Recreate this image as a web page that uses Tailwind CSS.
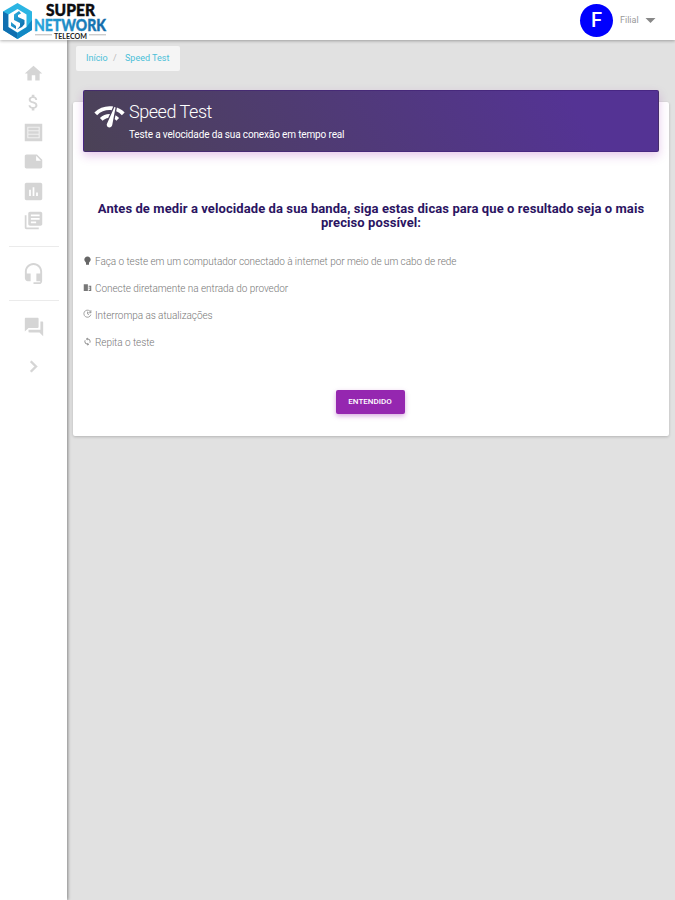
<!DOCTYPE html>
<html lang="pt-BR">

<head>
    <meta charset="utf-8">
    <title>Speed Test</title>
    <script src="https://cdn.jsdelivr.net/npm/@tailwindcss/browser@4"></script>
</head>

<body class="h-screen flex flex-col overflow-hidden bg-[#e1e1e1] font-['Roboto',sans-serif]">
    <header class="relative z-10 h-10 shrink-0 flex items-center justify-between bg-white shadow-[0_1px_3px_rgba(0,0,0,0.3)]">
        <svg class="h-10 w-[110px] overflow-visible" viewBox="0 0 110 40">
            <defs>
                <linearGradient id="hex" x1="0" y1="0" x2="1" y2="1">
                    <stop offset="0" stop-color="#2fbbe8" />
                    <stop offset="1" stop-color="#0a64a6" />
                </linearGradient>
                <linearGradient id="word" x1="0" y1="0" x2="1" y2="0">
                    <stop offset="0" stop-color="#29a9df" />
                    <stop offset="1" stop-color="#1269a8" />
                </linearGradient>
            </defs>
            <!-- hexagon mark -->
            <path fill="#2bb5e3" d="M17.500 3L32 11.500V30L17.500 39 3 30V11.500z" />
            <path fill="#0f6fb0" d="M3 11.500L8.500 14.500V27L17.500 33V39L3 30z" />
            <path fill="#1188c4" d="M17.500 39L32 30V20L26.500 27 17.500 33z" />
            <path fill="#fff" d="M17.500 9L26.500 14.500V27L17.500 32.500 8.500 27V14.500z" />
            <path fill="url(#hex)" d="M19 11L14 14.500V20L20 23V26L17 29.500 22 27 24.500 24V20L18 17V15L21 13.500zM11 22V26L16 29V26z" />
            <text x="46" y="15.500" textLength="49" lengthAdjust="spacingAndGlyphs" font-family="Lato" font-weight="900" font-size="16.500" fill="#0c0c10" stroke="#0c0c10" stroke-width=".4">SUPER</text>
            <text x="34" y="30.500" textLength="72" lengthAdjust="spacingAndGlyphs" font-family="Lato" font-weight="900" font-size="16.500" fill="url(#word)" stroke="url(#word)" stroke-width=".4">NETWORK</text>
            <text x="54" y="39" textLength="33" lengthAdjust="spacingAndGlyphs" font-family="Lato" font-weight="700" font-size="8" fill="#222">TELECOM</text>
            <path stroke="#999" stroke-width=".7" d="M35 34.800H52M89 34.800H106" />
        </svg>
        <div class="flex items-center pr-[19px]">
            <div class="size-[33px] rounded-full bg-[#0000fe] text-white text-[20px] font-medium flex items-center justify-center">F</div>
            <span class="ml-[7px] mt-px w-5 text-[9px] text-[#999]">Filial</span>
            <svg class="ml-[5px] w-[11px] h-[5px]" viewBox="0 0 10 5" fill="#888"><path d="M0 0h10L5 5z" /></svg>
        </div>
    </header>

    <div class="flex grow min-h-0">
        <aside class="w-[67px] shrink-0 bg-white shadow-[1px_0_3px_rgba(0,0,0,0.4)] flex flex-col items-center text-[#d5d5d5]">
            <nav class="mt-[22.500px] flex flex-col gap-[8.600px]">
                <svg class="size-[21px]" viewBox="0 0 24 24" fill="currentColor"><path d="M10 20v-6h4v6h5v-8h3L12 3 2 12h3v8z" /></svg>
                <svg class="size-[21px]" viewBox="0 0 24 24" fill="currentColor"><path d="M11.800 10.900c-2.270-.59-3-1.200-3-2.150 0-1.090 1.010-1.850 2.700-1.850 1.780 0 2.440.85 2.500 2.100h2.210c-.07-1.720-1.120-3.300-3.210-3.810V3h-3v2.160c-1.940.42-3.500 1.680-3.500 3.610 0 2.310 1.910 3.460 4.700 4.130 2.500.6 3 1.480 3 2.410 0 .69-.49 1.790-2.700 1.790-2.060 0-2.870-.92-2.980-2.100h-2.200c.12 2.190 1.760 3.420 3.680 3.830V21h3v-2.150c1.950-.37 3.500-1.500 3.500-3.550 0-2.840-2.430-3.810-4.700-4.400z" /></svg>
                <svg class="size-[21px]" viewBox="0 0 24 24" fill="currentColor"><path d="M2 2h20v20H2z" /><path stroke="#fff" stroke-opacity=".65" stroke-width="1.300" fill="none" d="M5.500 6h13v12h-13zM5.500 10h13M5.500 14h13" /></svg>
                <svg class="size-[21px]" viewBox="0 0 24 24" fill="currentColor"><path d="M22 10l-6-6H4c-1.100 0-2 .9-2 2v12.010c0 1.100.9 1.990 2 1.990l16-.01c1.100 0 2-.89 2-2v-8zm-7-4.500l5.500 5.500H15V5.500z" /></svg>
                <svg class="size-[21px]" viewBox="0 0 24 24" fill="currentColor"><path d="M20 2H4c-1.100 0-2 .9-2 2v16c0 1.100.9 2 2 2h16c1.100 0 2-.9 2-2V4c0-1.100-.9-2-2-2zM9 17H7v-7h2v7zm4 0h-2V7h2v10zm4 0h-2v-4h2v4z" /></svg>
                <svg class="size-[21px]" viewBox="0 0 24 24" fill="currentColor"><path d="M4 6H2v14c0 1.100.9 2 2 2h14v-2H4V6zm16-4H8c-1.100 0-2 .9-2 2v12c0 1.100.9 2 2 2h12c1.100 0 2-.9 2-2V4c0-1.100-.9-2-2-2zm-1 9H9V9h10v2zm-4 4H9v-2h6v2zm4-8H9V5h10v2z" /></svg>
            </nav>
            <hr class="mt-[15px] w-[50px] border-[#ebebeb]">
            <svg class="mt-[15px] size-[23px]" viewBox="0 0 24 24" fill="currentColor"><path d="M12 1c-4.970 0-9 4.030-9 9v7c0 1.660 1.340 3 3 3h3v-8H5v-2c0-3.870 3.130-7 7-7s7 3.130 7 7v2h-4v8h4v1h-7v2h6c1.660 0 3-1.340 3-3V10c0-4.970-4.030-9-9-9z" /></svg>
            <hr class="mt-[15px] w-[50px] border-[#ebebeb]">
            <svg class="mt-[15px] size-[22px]" viewBox="0 0 24 24" fill="currentColor"><path d="M21 6h-2v9H6v2c0 .55.45 1 1 1h11l4 4V7c0-.55-.45-1-1-1zm-4 6V3c0-.55-.45-1-1-1H3c-.55 0-1 .45-1 1v14l4-4h10c.55 0 1-.45 1-1z" /></svg>
            <svg class="mt-[17px] size-[23px]" viewBox="0 0 24 24" fill="currentColor" stroke="currentColor" stroke-width=".6"><path d="M10 6L8.590 7.410 13.170 12l-4.580 4.590L10 18l6-6z" /></svg>
        </aside>

        <main class="grow pl-1.5 pr-1.5 pt-1.5">
            <div class="ml-[3px] w-[104px] h-[25px] pl-2.5 pt-px flex items-center bg-[#f5f5f5] rounded-[2px] text-[9px] text-[#4bc0d8]">
                <span class="w-[22px]">Início</span>
                <span class="ml-[5px] w-3 text-[#bbb]">/</span>
                <span class="whitespace-nowrap">Speed Test</span>
            </div>

            <section class="mt-[31px] h-[334px] bg-white rounded-[2px] shadow-[0_1px_3px_rgba(0,0,0,0.2)] px-2.5 flex flex-col">
                <div class="-mt-3 h-[62px] shrink-0 flex rounded-[2px] pl-[9px] text-white bg-linear-[60deg,#4b4256,#543394_85%] border border-[#411f78]/60 shadow-[0_4px_10px_rgba(156,39,176,0.25)]">
                    <svg class="mt-[9px] size-[33px]" viewBox="0 0 24 24" fill="currentColor"><path d="M15.900 5c-.17 0-.32.09-.41.23l-.07.15-5.180 11.650c-.16.29-.26.61-.26.96 0 1.110.9 2.010 2.010 2.010.96 0 1.770-.68 1.960-1.590l.01-.03L16.400 5.500c0-.28-.22-.5-.5-.5zM1 9l2 2c2.880-2.880 6.790-4.080 10.530-3.620l1.190-2.680C9.890 3.840 4.740 5.270 1 9zm20 2l2-2c-1.640-1.640-3.550-2.820-5.590-3.570l-.53 2.820c1.500.62 2.900 1.530 4.120 2.750zm-4 4l2-2c-.8-.8-1.700-1.420-2.660-1.890l-.55 2.920c.42.27.83.59 1.210.97zM5 13l2 2c1.130-1.130 2.560-1.790 4.030-2l1.280-2.880c-2.630-.08-5.300.87-7.310 2.880z" /></svg>
                    <div class="ml-[3px] pt-2.5">
                        <h4 class="text-[18px] leading-[22px] font-light tracking-[-0.45px]">Speed Test</h4>
                        <p class="mt-[5px] text-[10px] leading-[14px] tracking-[-0.14px]">Teste a velocidade da sua conexão em tempo real</p>
                    </div>
                </div>

                <h3 class="mt-[50px] text-center text-[13px] leading-[14px] tracking-[0.09px] font-bold text-[#2b1462]">Antes de medir a velocidade da sua banda, siga estas dicas para que o resultado seja o mais<br>preciso possível:</h3>

                <ul class="mt-[18px] text-[10px] leading-[27px] tracking-[-0.055px] font-light text-[#777]">
                    <li class="flex gap-[3px]">
                        <svg class="mt-[8px] size-[9px]" viewBox="0 0 24 24" fill="#666"><path d="M12 1C7 1 3.500 5 3.500 9.500c0 4 3 6 4.500 8.500v5h8v-5c1.500-2.500 4.500-4.500 4.500-8.500C20.500 5 17 1 12 1z" /></svg>
                        Faça o teste em um computador conectado à internet por meio de um cabo de rede
                    </li>
                    <li class="flex gap-[3px]">
                        <svg class="mt-[8px] size-[9px]" viewBox="0 0 24 24" fill="#777"><path d="M2 3h11v18H2zM15 7h7v3h-7zM19 10h3v11h-3zM15 12h3v3h-3zM15 18h4v3h-4z" /></svg>
                        Conecte diretamente na entrada do provedor
                    </li>
                    <li class="flex gap-[3px]">
                        <svg class="mt-[7px] size-[9px]" viewBox="0 0 24 24" fill="none" stroke="#888" stroke-width="2"><path d="M21 10A9.500 9.500 0 1 0 21 15M21 3v7h-7M12 7v6l4 2" /></svg>
                        Interrompa as atualizações
                    </li>
                    <li class="flex gap-[3px]">
                        <svg class="mt-[8px] size-[9px]" viewBox="0 0 24 24" fill="#777"><path d="M12 4V1L8 5l4 4V6c3.310 0 6 2.690 6 6 0 1.010-.25 1.970-.7 2.800l1.460 1.460C19.540 15.030 20 13.570 20 12c0-4.420-3.580-8-8-8zm0 14c-3.310 0-6-2.690-6-6 0-1.010.25-1.970.7-2.800L5.240 7.740C4.460 8.970 4 10.430 4 12c0 4.420 3.580 8 8 8v3l4-4-4-4v3z" /></svg>
                        Repita o teste
                    </li>
                </ul>

                <button class="mt-[33.500px] ml-[-2px] self-center w-[69px] h-6 rounded-[2px] bg-[#9527b0] text-white text-[8px] font-medium shadow-[0_2px_5px_rgba(156,39,176,0.4)]">ENTENDIDO</button>
            </section>
        </main>
    </div>
</body>

</html>
